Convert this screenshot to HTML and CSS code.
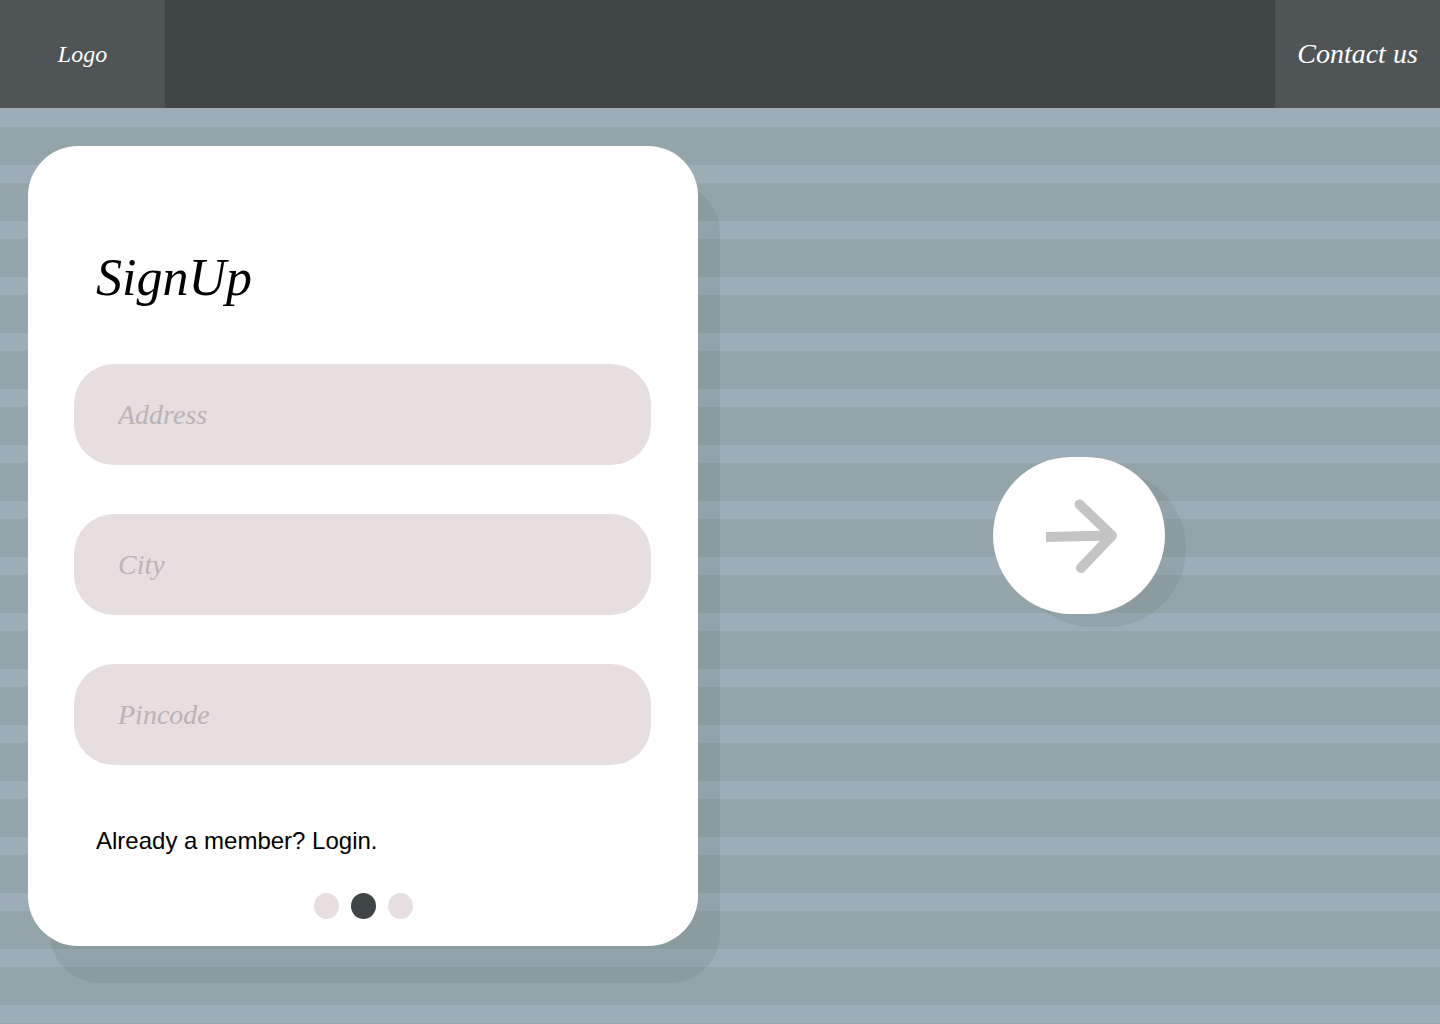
FILE: index.html
```html
<!DOCTYPE html>
<html lang="en">
<head>
  <meta charset="utf-8">
  <meta name="viewport" content="width=device-width, initial-scale=1">
  <title>SignUp</title>
  <link rel="stylesheet" href="styles.css">
</head>
<body>
  <header class="topbar">
    <a class="topbar-link topbar-logo" href="#">Logo</a>
    <a class="topbar-link" href="#contact">Contact us</a>
  </header>
  <main class="page">
    <form class="card" id="signup">
      <h1 class="title">SignUp</h1>
      <div class="fields">
        <input class="field" type="text" name="address" placeholder="Address" aria-label="Address">
        <input class="field" type="text" name="city" placeholder="City" aria-label="City">
        <input class="field" type="text" name="pincode" placeholder="Pincode" aria-label="Pincode">
      </div>
      <a class="login" href="#login">Already a member? Login.</a>
      <div class="steps">
        <span class="step"></span>
        <span class="step step-current"></span>
        <span class="step"></span>
      </div>
    </form>
    <div class="next-area">
      <button class="next" type="submit" form="signup" aria-label="Next">
        <svg class="arrow" width="72" height="76" viewBox="0 0 72 76" fill="none" stroke="currentColor" stroke-width="10" aria-hidden="true">
          <path d="M0 39 L64 37.500"/>
          <path d="M33.500 6.500 L66 37.500 L35 70" stroke-linecap="round" stroke-linejoin="round"/>
        </svg>
      </button>
    </div>
  </main>
</body>
</html>
```
FILE: styles.css
```css
:root {
  --slate: #404547;
  --slate-light: #4f5557;
  --stripe-light: #9cadb7;
  --stripe-dark: #94a4ab;
  --shade: rgba(64, 69, 60, 0.09);
  --blush: #e6dedf;
  --script: "Liberation Serif", serif;
}

* {
  box-sizing: border-box;
}

body {
  margin: 0;
  min-height: 100vh;
  display: flex;
  flex-direction: column;
  font-family: var(--script);
}

.topbar {
  display: flex;
  justify-content: space-between;
  background: var(--slate);
}

.topbar-link {
  display: flex;
  align-items: center;
  justify-content: center;
  width: 165px;
  height: 108px;
  background: var(--slate-light);
  color: #fff;
  font-size: 28px;
  font-style: italic;
  text-decoration: none;
}

.topbar-logo {
  font-size: 24px;
}

.page {
  flex: 1;
  display: grid;
  grid-template-columns: 1fr 1fr;
  align-items: start;
  padding: 38px 0 78px;
  background: repeating-linear-gradient(var(--stripe-light) 0 18px, var(--stripe-dark) 18px 56px) 0 1px no-repeat var(--stripe-light);
}

.card {
  display: flex;
  flex-direction: column;
  margin: 0 22px 0 28px;
  padding: 92px 47px 27px 46px;
  border-radius: 50px;
  background: #fff;
  box-shadow: 22px 37px 0 var(--shade);
}

.title {
  margin: 0 22px 46px;
  font-size: 52px;
  font-style: italic;
  font-weight: 400;
  line-height: 80px;
}

.fields {
  display: grid;
  gap: 49px;
}

.field {
  width: 100%;
  height: 101px;
  padding: 0 44px;
  border: 0;
  border-radius: 40px;
  background: var(--blush);
  color: #000;
  font: italic 28px var(--script);
}

.field::placeholder {
  color: #b9b4b5;
  opacity: 1;
}

.login {
  align-self: flex-start;
  margin: 60px 22px 36px;
  color: #000;
  font: 24px/32px "Liberation Sans", sans-serif;
  text-decoration: none;
}

.steps {
  display: flex;
  justify-content: center;
  gap: 12px;
  padding-left: 2px;
}

.step {
  width: 25px;
  height: 26px;
  border-radius: 50%;
  background: var(--blush);
}

.step-current {
  background: var(--slate);
}

.next-area {
  align-self: center;
  display: flex;
  justify-content: center;
  padding: 0 2px 22px 0;
}

.next {
  display: flex;
  align-items: center;
  justify-content: center;
  width: 172px;
  height: 157px;
  padding: 2px 0 0 6px;
  border: 0;
  border-radius: 80px;
  background: #fff;
  color: #c4c4c4;
  box-shadow: 21px 13px 0 var(--shade);
}
```
